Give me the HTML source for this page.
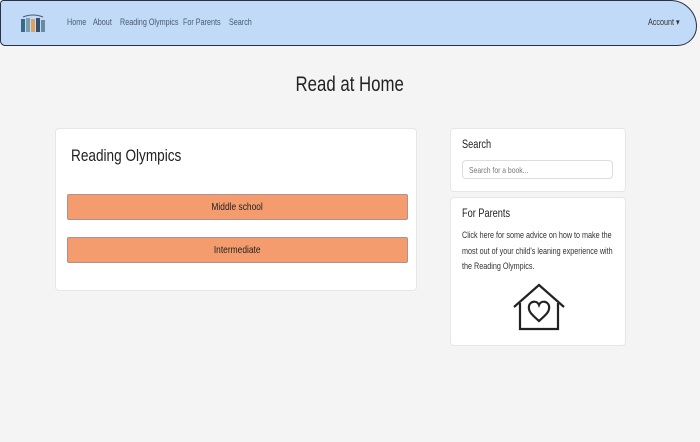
<!DOCTYPE html>
<html><head><style>
body{margin:0;width:700px;height:442px;background:#f4f4f4;font-family:"Liberation Sans",sans-serif;overflow:hidden;position:relative;color:#222}
.n{display:inline-block;transform:scaleX(0.8);transform-origin:left center;white-space:nowrap}
.nc{display:inline-block;transform:scaleX(0.8);white-space:nowrap}
.nav{position:absolute;left:0;top:0;width:697px;height:46px;background:#c0daf8;border:1.5px solid #2a3140;border-radius:4px 30px 22px 6px;box-sizing:border-box}
.nav a{position:absolute;top:16px;font-size:9px;color:#4a5a70}
.card{position:absolute;background:#fff;border:1px solid #e6e6e6;border-radius:4px}
.btn{position:absolute;left:11px;width:339px;height:24px;background:#f49c6e;border:1px solid #b39090;border-radius:2px;font-size:10.5px;text-align:center;line-height:24px;color:#222}
</style></head><body>
<div class="nav">
<svg style="position:absolute;left:19px;top:13px" width="26" height="20"><rect x="1" y="5" width="4" height="13" fill="#3a6a8a"/><rect x="6" y="4" width="4" height="14" fill="#7aa0b0"/><rect x="11" y="5" width="4" height="13" fill="#e0a060"/><rect x="16" y="4" width="4" height="14" fill="#355070"/><rect x="21" y="6" width="4" height="12" fill="#6a8aa0"/><path d="M3 3 Q13 -1 23 3" stroke="#557" fill="none"/></svg>
<a style="left:66px" class="n">Home</a><a style="left:92px" class="n">About</a><a style="left:119px" class="n">Reading Olympics</a><a style="left:182px" class="n">For Parents</a><a style="left:228px" class="n">Search</a>
<a style="left:647px;color:#333" class="n">Account ▾</a>
</div>
<div style="position:absolute;left:0;width:700px;top:73px;text-align:center;font-size:21px;color:#222"><span class="nc">Read at Home</span></div>
<div class="card" style="left:55px;top:128px;width:360px;height:161px">
<div style="position:absolute;left:15px;top:17px;font-size:17px" class="n">Reading Olympics</div>
<div class="btn" style="top:65px"><span class="nc">Middle school</span></div>
<div class="btn" style="top:108px"><span class="nc">Intermediate</span></div>
</div>
<div class="card" style="left:450px;top:128px;width:174px;height:62px">
<div style="position:absolute;left:11px;top:10px;font-size:11.5px" class="n">Search</div>
<div style="position:absolute;left:11px;top:31px;width:151px;height:19px;border:1px solid #ddd;border-radius:4px;font-size:8.5px;color:#777;line-height:19px;padding-left:6px;box-sizing:border-box"><span class="n">Search for a book...</span></div>
</div>
<div class="card" style="left:450px;top:197px;width:174px;height:147px">
<div style="position:absolute;left:11px;top:10px;font-size:11.5px" class="n">For Parents</div>
<div style="position:absolute;left:11px;top:30px;width:192px;font-size:9px;line-height:15.5px;color:#333;transform:scaleX(0.8);transform-origin:left top">Click here for some advice on how to make the most out of your child's leaning experience with the Reading Olympics.</div>
<svg style="position:absolute;left:61px;top:85px" width="54" height="50" fill="none" stroke="#222" stroke-width="2.2"><path d="M2 24 L27 2 L52 24"/><path d="M8 20 V46 H46 V20"/><path d="M27 38 C19 31 16 28 17 23 C18 18 25 17 27 22 C29 17 36 18 37 23 C38 28 35 31 27 38Z"/></svg>
</div>
</body></html>
